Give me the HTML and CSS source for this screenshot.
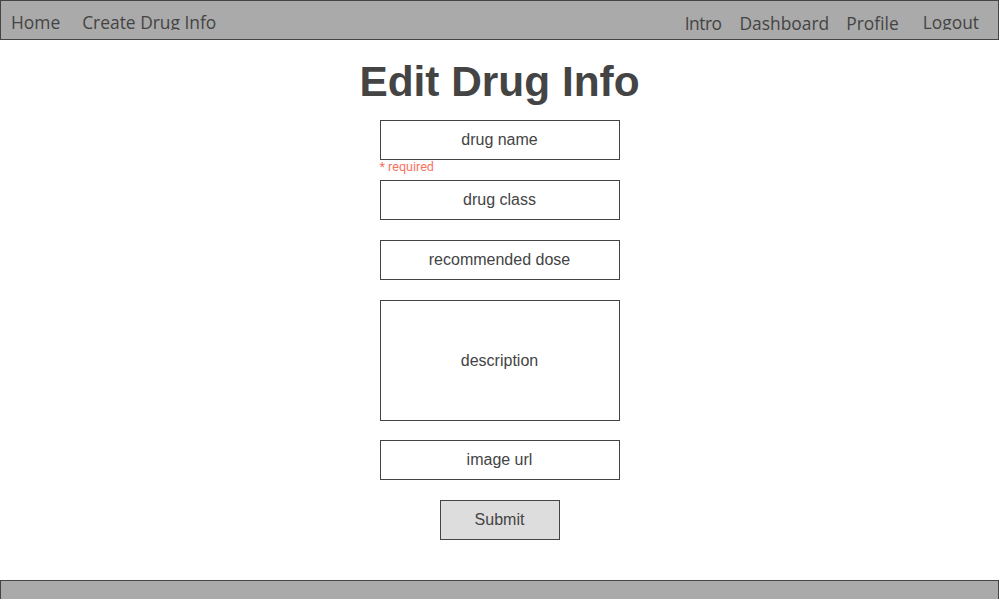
FILE: index.html
```html
<!DOCTYPE html>
<html>
<head>
<meta charset="utf-8">
<link rel="stylesheet" href="styles.css">
</head>
<body>
<nav class="nav">
  <div class="nav-left">
    <a class="nav-link home">Home</a>
    <a class="nav-link create">Create Drug Info</a>
  </div>
  <div class="nav-right">
    <a class="nav-link low intro">Intro</a>
    <a class="nav-link low dash">Dashboard</a>
    <a class="nav-link low profile">Profile</a>
    <a class="nav-link logout">Logout</a>
  </div>
</nav>
<main class="main">
  <h1 class="title">Edit Drug Info</h1>
  <form class="form">
    <div class="field">
      <input class="input" placeholder="drug name">
      <span class="req">* required</span>
    </div>
    <input class="input" placeholder="drug class">
    <input class="input" placeholder="recommended dose">
    <textarea class="input area" placeholder="description"></textarea>
    <input class="input" placeholder="image url">
    <button class="submit" type="button">Submit</button>
  </form>
</main>
<footer class="footer"></footer>
</body>
</html>
```
FILE: styles.css
```css
* { box-sizing: border-box; }
html, body { margin: 0; padding: 0; background: #fff; height: 599px; overflow: hidden; }
body { font-family: "Liberation Sans", Arial, sans-serif; color: #444; position: relative; }
.nav {
  height: 40px;
  background: #aaa;
  border: 1px solid #444;
  display: flex;
  justify-content: space-between;
  font-family: "Open Sans", sans-serif;
  font-size: 17.4px;
}
.nav-left, .nav-right { display: flex; align-items: flex-start; }
.nav-link { color: #444; display: block; height: 29px; overflow: hidden; line-height: 18px; padding-top: 12px; }
.nav-link.low { padding-top: 13px; height: 38px; }
.home { margin-left: 10px; }
.create { margin-left: 22px; }
.intro { letter-spacing: -0.5px; }
.dash { margin-left: 18px; }
.profile { margin-left: 17px; }
.logout { margin-left: 24px; margin-right: 19px; }
.main { display: flex; flex-direction: column; align-items: center; }
.title {
  margin: 17px 0 0;
  font-size: 42.4px;
  line-height: 50px;
  font-weight: bold;
  color: #444;
}
.form { display: flex; flex-direction: column; align-items: center; gap: 20px; margin-top: 13px; width: 240px; }
.field { position: relative; width: 240px; }
.input {
  display: block;
  width: 240px;
  height: 40px;
  border: 1px solid #444;
  border-radius: 0;
  background: #fff;
  font-family: "Liberation Sans", Arial, sans-serif;
  font-size: 16px;
  color: #444;
  text-align: center;
  padding: 0;
  margin: 0;
  outline: none;
}
.input::placeholder { color: #444; opacity: 1; }
.area { height: 121px; resize: none; padding-top: 50px; line-height: 20px; margin-bottom: -1px; }
.req {
  position: absolute;
  left: 0;
  top: 39px;
  font-size: 12.6px;
  line-height: 16px;
  color: #f8735f;
  font-family: "Roboto", "Liberation Sans", sans-serif;
}
.submit {
  width: 120px;
  height: 40px;
  background: #ddd;
  border: 1px solid #444;
  border-radius: 0;
  font-family: "Liberation Sans", Arial, sans-serif;
  font-size: 16px;
  color: #444;
  margin: 0;
}
.footer {
  position: absolute;
  left: 0;
  right: 0;
  top: 580px;
  height: 40px;
  background: #aaa;
  border: 1px solid #444;
}
```
